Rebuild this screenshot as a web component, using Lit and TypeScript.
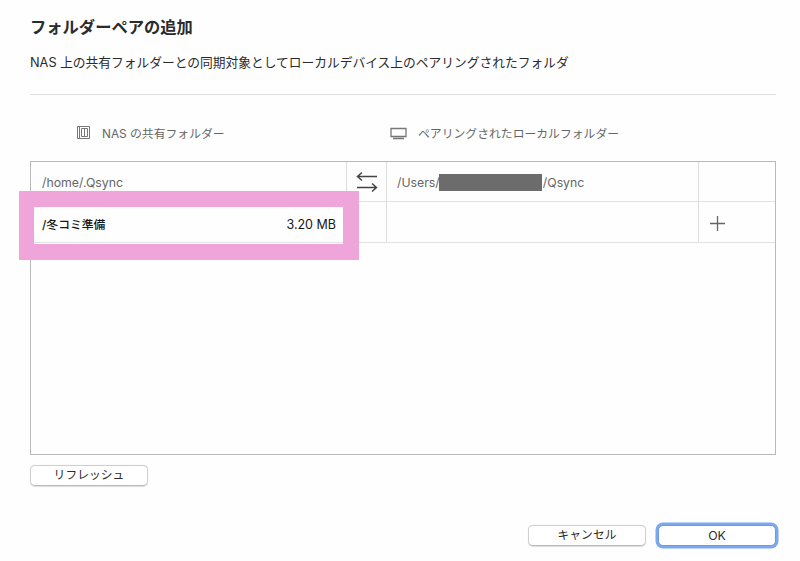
import { LitElement, html, css } from "lit";
import { customElement } from "lit/decorators.js";

@customElement("app-root")
export class AppRoot extends LitElement {
  static styles = css`
    :host {
      display: block;
      position: relative;
      box-sizing: border-box;
      width: 800px;
      height: 561px;
      padding: 17px 24px 0 30px;
      overflow: hidden;
      background: #fefefe;
      color: #2b2b2b;
      font-family: Inter, "Noto Sans CJK JP", sans-serif;
      font-size: 12px;
      white-space: nowrap;
    }
    * { box-sizing: border-box; }
    h1 {
      margin: 0;
      height: 20px;
      line-height: 20px;
      font-size: 16.3px;
      font-weight: 700;
    }
    p {
      margin: 15px 0 0;
      height: 20px;
      line-height: 21px;
      font-size: 12.74px;
    }
    .rule {
      width: 746px;
      height: 1px;
      margin-top: 22px;
      background: #dfdfdf;
    }
    .heads {
      display: grid;
      grid-template-columns: 313px 1fr;
      height: 66px;
      padding: 28px 0 0 47px;
      color: #666;
      line-height: 22px;
    }
    .head { display: flex; height: 20px; font-size: 11.83px; }
    .nas { width: 13px; height: 13px; margin: 3px 12px 0 0; }
    .pc { width: 17px; height: 13px; margin: 4px 11px 0 0; }
    .table {
      width: 746px;
      height: 294px;
      border: 1px solid #b9b9b9;
    }
    .row {
      display: grid;
      grid-template-columns: 315px 40px 312px 1fr;
      height: 40px;
      border-bottom: 1px solid #e2e2e2;
      color: #666;
    }
    .row + .row { height: 41px; }
    .cell {
      display: flex;
      align-items: center;
      padding: 3px 0 0 10px;
      border-left: 1px solid #dedede;
    }
    .cell:first-child { border: 0; padding-left: 11px; }
    .path { font-size: 12.3px; line-height: 18px; }
    .icon { padding: 1px 0 0 9px; }
    .icon.add { padding: 3px 0 0 10px; }
    .swap { width: 22px; height: 22px; }
    .plus { width: 17px; height: 17px; }
    .masked { width: 103px; height: 17px; margin: -1px 0 0 -1px; background: #6d6c6d; }
    .masked + .path { margin-left: 1px; }
    .active {
      color: #161616;
      justify-content: space-between;
      padding-right: 10px;
    }
    .name { font-size: 11.8px; font-weight: 500; }
    .size { font-size: 12.5px; padding-top: 2px; }
    .marker {
      position: absolute;
      left: 19px;
      top: 191px;
      width: 340px;
      height: 69px;
      border: 16px solid #efa5d9;
      border-left-width: 15px;
    }
    button {
      display: block;
      width: 118px;
      height: 21px;
      padding: 0;
      border: 1px solid #cfcfcf;
      border-bottom-color: #b9b9b9;
      border-radius: 5px;
      background: #fff;
      color: #2b2b2b;
      font: inherit;
      font-size: 11.8px;
      line-height: 17px;
      text-align: center;
      box-shadow: 0 0.5px 1px #0002;
    }
    .refresh { margin-top: 10px; }
    .actions { display: flex; gap: 12px; margin: 39px 0 0 498px; }
    .ok { border-color: #6c9ae4; box-shadow: 0 0 0 2.5px #7da7ee; font-size: 12.3px; }
  `;

  render() {
    return html`
      <h1>フォルダーペアの追加</h1>
      <p>NAS 上の共有フォルダーとの同期対象としてローカルデバイス上のペアリングされたフォルダ</p>
      <div class="rule"></div>
      <div class="heads">
        <div class="head">
          <svg class="nas" viewBox="0 0 13 13" fill="none" stroke="#777">
            <path d="M.5.5h12v12H.5zM2.5 1v11M4.5 2.5h6v8h-6zM7.5 2.5v8" />
          </svg>
          <span>NAS の共有フォルダー</span>
        </div>
        <div class="head">
          <svg class="pc" viewBox="0 0 17 13" fill="none" stroke="#777">
            <path d="M1 1.5h15v8H1zM3 11.5h11" stroke-width="1.3" />
          </svg>
          <span>ペアリングされたローカルフォルダー</span>
        </div>
      </div>
      <div class="table">
        <div class="row">
          <div class="cell"><span class="path">/home/.Qsync</span></div>
          <div class="cell icon">
            <svg class="swap" viewBox="0 0 22 22" fill="none" stroke="#444" stroke-width="1.5">
              <path d="M21 5.5H1.5M6 1.5L1.5 5.5L6 9.5M1 16.5h19.5M16 12.5l4.5 4l-4.5 4" />
            </svg>
          </div>
          <div class="cell">
            <span class="path">/Users/</span><span class="masked"></span><span class="path">/Qsync</span>
          </div>
          <div class="cell"></div>
        </div>
        <div class="row">
          <div class="cell active"><span class="name">/冬コミ準備</span><span class="size">3.20 MB</span></div>
          <div class="cell"></div>
          <div class="cell"></div>
          <div class="cell icon add">
            <svg class="plus" viewBox="0 0 17 17" fill="none" stroke="#666" stroke-width="1.3">
              <path d="M8.5 1v15M1 8.5h15" />
            </svg>
          </div>
        </div>
      </div>
      <button class="refresh">リフレッシュ</button>
      <div class="actions">
        <button>キャンセル</button>
        <button class="ok">OK</button>
      </div>
      <div class="marker"></div>
    `;
  }
}
